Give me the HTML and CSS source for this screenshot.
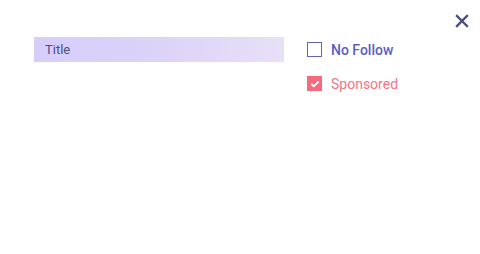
FILE: index.html
```html
<!DOCTYPE html>
<html>
<head>
<meta charset="utf-8">
<link rel="stylesheet" href="styles.css">
</head>
<body>
<div class="panel">
  <div class="topbar">
    <button class="close" aria-label="Close">
      <svg width="14" height="14" viewBox="0 0 14 14"><path d="M2 2 L12 12 M12 2 L2 12" stroke="#4a5078" stroke-width="2.4" stroke-linecap="square"/></svg>
    </button>
  </div>
  <div class="content">
    <div class="left">
      <div class="title-bar">Title</div>
    </div>
    <div class="right">
      <label class="opt opt-follow"><span class="box"></span><span>No Follow</span></label>
      <label class="opt opt-sponsored"><span class="box checked"><svg width="10" height="8" viewBox="0 0 10 8"><path d="M1.3 4 L3.8 6.3 L8.7 1.5" fill="none" stroke="#fff" stroke-width="1.8"/></svg></span><span>Sponsored</span></label>
    </div>
  </div>
</div>
</body>
</html>
```
FILE: styles.css
```css
html, body { margin: 0; padding: 0; background: #fff; }
body { font-family: Roboto, "Noto Sans", sans-serif; width: 480px; height: 254px; overflow: hidden; }
.panel { display: flex; flex-direction: column; }
.topbar { display: flex; justify-content: flex-end; padding: 14px 11px 0 0; height: 23px; }
.close { border: 0; background: none; padding: 0; width: 14px; height: 14px; display: flex; cursor: pointer; }
.content { display: flex; padding-left: 34px; }
.left { width: 250px; }
.title-bar {
  height: 25px; box-sizing: border-box; padding-left: 11px;
  display: flex; align-items: center;
  font-size: 13px; color: #4b4f7c;
  background: linear-gradient(90deg, #d6cdfc 0%, #dcd3f8 50%, #e8e0f6 100%);
}
.right { margin-left: 23px; display: flex; flex-direction: column; gap: 19px; padding-top: 5px; }
.opt { display: flex; align-items: center; gap: 9px; font-size: 14px; height: 15px; }
.box { width: 15px; height: 15px; box-sizing: border-box; display: flex; align-items: center; justify-content: center; }
.opt-follow { color: #5a5ec4; font-weight: 500; }
.opt-follow .box { border: 1.5px solid #6064b8; }
.opt-sponsored { color: #f27684; }
.box.checked { background: #f56a80; }
```
